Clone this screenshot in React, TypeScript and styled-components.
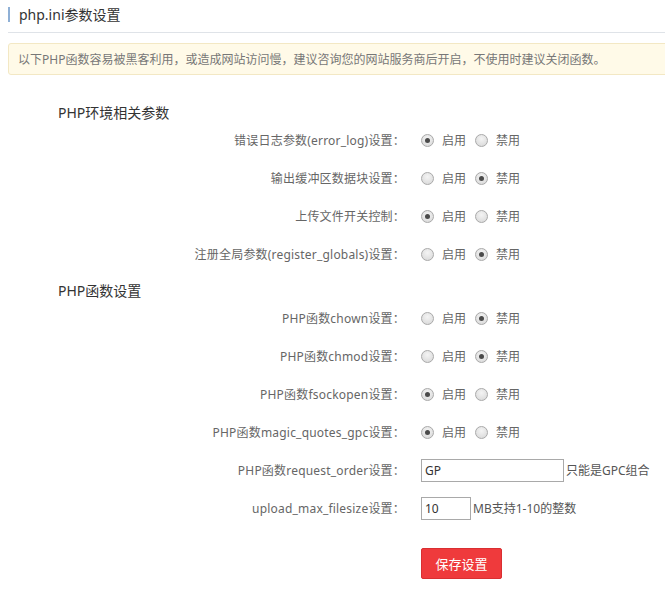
import React from 'react'
import styled, { createGlobalStyle } from 'styled-components'

const GlobalStyle = createGlobalStyle`
  body {
    margin: 0;
    background: #fff;
    overflow-x: hidden;
    font-family: 'Noto Sans', 'Noto Sans CJK SC', sans-serif;
    font-size: 12px;
    color: #666;
  }
`

const Page = styled.div`
  padding: 0 0 0 8px;
`

const Header = styled.div`
  height: 32px;
  border-bottom: 1px solid #dfe3e8;
  display: flex;
  align-items: center;
`

const HeaderTitle = styled.h2`
  margin: 0 0 4px 0;
  padding-left: 9px;
  border-left: 2px solid #8fb0d6;
  font-size: 14px;
  font-weight: normal;
  line-height: 15px;
  color: #333;
`

const Notice = styled.div`
  margin: 10px -12px 0 0;
  height: 30px;
  display: flex;
  align-items: center;
  padding-left: 9px;
  background: #fffae8;
  border: 1px solid #f3e8c4;
  border-radius: 3px;
  color: #777;
  font-size: 12px;
`

const Form = styled.form`
  padding-top: 30px;
`

const SectionTitle = styled.h3<{ $first?: boolean }>`
  margin: ${({ $first }) => ($first ? '0' : '10px')} 0 0 50px;
  font-size: 14px;
  font-weight: normal;
  line-height: 16px;
  color: #333;
`

const Row = styled.div`
  display: grid;
  grid-template-columns: 397px auto;
  column-gap: 16px;
  align-items: center;
  height: 38px;
`

const Label = styled.label`
  text-align: right;
  color: #666;
  white-space: nowrap;
  letter-spacing: 0.2px;
`

const Controls = styled.div`
  display: flex;
  align-items: center;
`

const RadioLabel = styled.label`
  display: flex;
  align-items: center;
  gap: 8px;
  margin-right: 9px;
  color: #666;
  cursor: pointer;
`

const RadioDot = styled.input`
  appearance: none;
  margin: 0;
  width: 13px;
  height: 13px;
  border-radius: 50%;
  border: 1px solid #a9a9a9;
  background: radial-gradient(circle at 50% 35%, #f4f4f4 0%, #d6d6d6 100%);
  box-sizing: border-box;
  position: relative;
  &:checked::after {
    content: '';
    position: absolute;
    left: 3px;
    top: 3px;
    width: 5px;
    height: 5px;
    border-radius: 50%;
    background: #4a4a4a;
  }
`

const TextInput = styled.input<{ $width: number }>`
  width: ${({ $width }) => $width}px;
  height: 23px;
  box-sizing: border-box;
  border: 1px solid #a9a9a9;
  padding: 0 3px;
  font-family: 'Noto Sans', 'Noto Sans CJK SC', sans-serif;
  font-size: 12px;
  color: #333;
  outline: none;
`

const Hint = styled.span`
  margin-left: 2px;
  color: #555;
`

const ButtonRow = styled.div`
  padding: 21px 0 0 413px;
`

const SaveButton = styled.button`
  width: 81px;
  height: 31px;
  border: 1px solid #d92f31;
  border-radius: 2px;
  background: #ef3a3c;
  color: #fff;
  font-family: 'Noto Sans', 'Noto Sans CJK SC', sans-serif;
  font-size: 13px;
  cursor: pointer;
`

type RadioSetting = { name: string; label: string; on: boolean }

const envSettings: RadioSetting[] = [
  { name: 'error_log', label: '错误日志参数(error_log)设置：', on: true },
  { name: 'output_buffering', label: '输出缓冲区数据块设置：', on: false },
  { name: 'file_uploads', label: '上传文件开关控制：', on: true },
  { name: 'register_globals', label: '注册全局参数(register_globals)设置：', on: false },
]

const funcSettings: RadioSetting[] = [
  { name: 'chown', label: 'PHP函数chown设置：', on: false },
  { name: 'chmod', label: 'PHP函数chmod设置：', on: false },
  { name: 'fsockopen', label: 'PHP函数fsockopen设置：', on: true },
  { name: 'magic_quotes_gpc', label: 'PHP函数magic_quotes_gpc设置：', on: true },
]

const RadioRow = ({ setting }: { setting: RadioSetting }) => (
  <Row>
    <Label>{setting.label}</Label>
    <Controls>
      <RadioLabel>
        <RadioDot type="radio" name={setting.name} defaultChecked={setting.on} />
        启用
      </RadioLabel>
      <RadioLabel>
        <RadioDot type="radio" name={setting.name} defaultChecked={!setting.on} />
        禁用
      </RadioLabel>
    </Controls>
  </Row>
)

const App = () => {
  return (
    <Page>
      <GlobalStyle />
      <Header>
        <HeaderTitle>php.ini参数设置</HeaderTitle>
      </Header>
      <Notice>以下PHP函数容易被黑客利用，或造成网站访问慢，建议咨询您的网站服务商后开启，不使用时建议关闭函数。</Notice>
      <Form onSubmit={(e) => e.preventDefault()}>
        <SectionTitle $first>PHP环境相关参数</SectionTitle>
        {envSettings.map((s) => (
          <RadioRow key={s.name} setting={s} />
        ))}
        <SectionTitle>PHP函数设置</SectionTitle>
        {funcSettings.map((s) => (
          <RadioRow key={s.name} setting={s} />
        ))}
        <Row>
          <Label>PHP函数request_order设置：</Label>
          <Controls>
            <TextInput $width={143} defaultValue="GP" />
            <Hint>只能是GPC组合</Hint>
          </Controls>
        </Row>
        <Row>
          <Label>upload_max_filesize设置：</Label>
          <Controls>
            <TextInput $width={50} defaultValue="10" />
            <Hint>MB支持1-10的整数</Hint>
          </Controls>
        </Row>
        <ButtonRow>
          <SaveButton type="submit">保存设置</SaveButton>
        </ButtonRow>
      </Form>
    </Page>
  )
}

export default App
